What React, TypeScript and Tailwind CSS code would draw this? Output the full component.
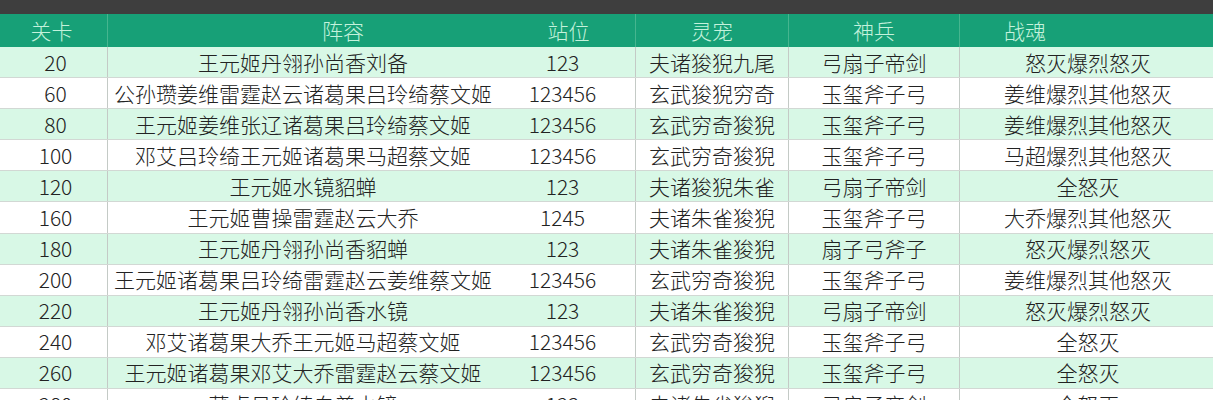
import React from "react";

type Row = [string, string, string, string, string, string];

const rows: Row[] = [
  ["20", "王元姬丹翎孙尚香刘备", "123", "夫诸狻猊九尾", "弓扇子帝剑", "怒灭爆烈怒灭"],
  ["60", "公孙瓒姜维雷霆赵云诸葛果吕玲绮蔡文姬", "123456", "玄武狻猊穷奇", "玉玺斧子弓", "姜维爆烈其他怒灭"],
  ["80", "王元姬姜维张辽诸葛果吕玲绮蔡文姬", "123456", "玄武穷奇狻猊", "玉玺斧子弓", "姜维爆烈其他怒灭"],
  ["100", "邓艾吕玲绮王元姬诸葛果马超蔡文姬", "123456", "玄武穷奇狻猊", "玉玺斧子弓", "马超爆烈其他怒灭"],
  ["120", "王元姬水镜貂蝉", "123", "夫诸狻猊朱雀", "弓扇子帝剑", "全怒灭"],
  ["160", "王元姬曹操雷霆赵云大乔", "1245", "夫诸朱雀狻猊", "玉玺斧子弓", "大乔爆烈其他怒灭"],
  ["180", "王元姬丹翎孙尚香貂蝉", "123", "夫诸朱雀狻猊", "扇子弓斧子", "怒灭爆烈怒灭"],
  ["200", "王元姬诸葛果吕玲绮雷霆赵云姜维蔡文姬", "123456", "玄武穷奇狻猊", "玉玺斧子弓", "姜维爆烈其他怒灭"],
  ["220", "王元姬丹翎孙尚香水镜", "123", "夫诸朱雀狻猊", "弓扇子帝剑", "怒灭爆烈怒灭"],
  ["240", "邓艾诸葛果大乔王元姬马超蔡文姬", "123456", "玄武穷奇狻猊", "玉玺斧子弓", "全怒灭"],
  ["260", "王元姬诸葛果邓艾大乔雷霆赵云蔡文姬", "123456", "玄武穷奇狻猊", "玉玺斧子弓", "全怒灭"],
  ["280", "董卓吕玲绮白普水镜", "123", "夫诸朱雀狻猊", "弓扇子帝剑", "全怒灭"],
];

const cols = "grid grid-cols-[108px_390px_138px_153px_171px_253px]";

export default function App() {
  return (
    <div
      className="w-[1213px] h-[400px] overflow-hidden bg-white text-[#222] font-light"
      style={{ fontFamily: '"Noto Sans CJK SC", "Noto Sans", sans-serif' }}
    >
      <div className="h-[14px] bg-[#3e3e3e]" />
      <div className={`${cols} h-[33px] bg-[#17a077] text-[#c4f2dc] text-[21px] leading-none`}>
        <div className="flex items-center justify-center border-r border-[#46b58f] pr-1">关卡</div>
        <div className="flex items-center justify-center pl-[80px]">阵容</div>
        <div className="flex items-center justify-center border-r border-[#46b58f] pl-1">站位</div>
        <div className="flex items-center justify-center border-r border-[#46b58f]">灵宠</div>
        <div className="flex items-center justify-center border-r border-[#46b58f]">神兵</div>
        <div className="flex items-center pl-[44px]">战魂</div>
      </div>
      {rows.map((r, i) => (
        <div
          key={r[0]}
          className={`${cols} h-[31.1px] border-b border-[#d2d8d4] text-[21px] leading-none ${
            i % 2 === 0 ? "bg-[#d8f8e6]" : "bg-white"
          }`}
        >
          <div className="flex items-center justify-center border-r border-[#c4cac6] pl-1">{r[0]}</div>
          <div className="flex items-center justify-center whitespace-nowrap">{r[1]}</div>
          <div className="flex items-center justify-center border-r border-[#c4cac6] pr-2">{r[2]}</div>
          <div className="flex items-center justify-center border-r border-[#c4cac6]">{r[3]}</div>
          <div className="flex items-center justify-center border-r border-[#c4cac6]">{r[4]}</div>
          <div className="flex items-center justify-center pl-[3px]">{r[5]}</div>
        </div>
      ))}
    </div>
  );
}
